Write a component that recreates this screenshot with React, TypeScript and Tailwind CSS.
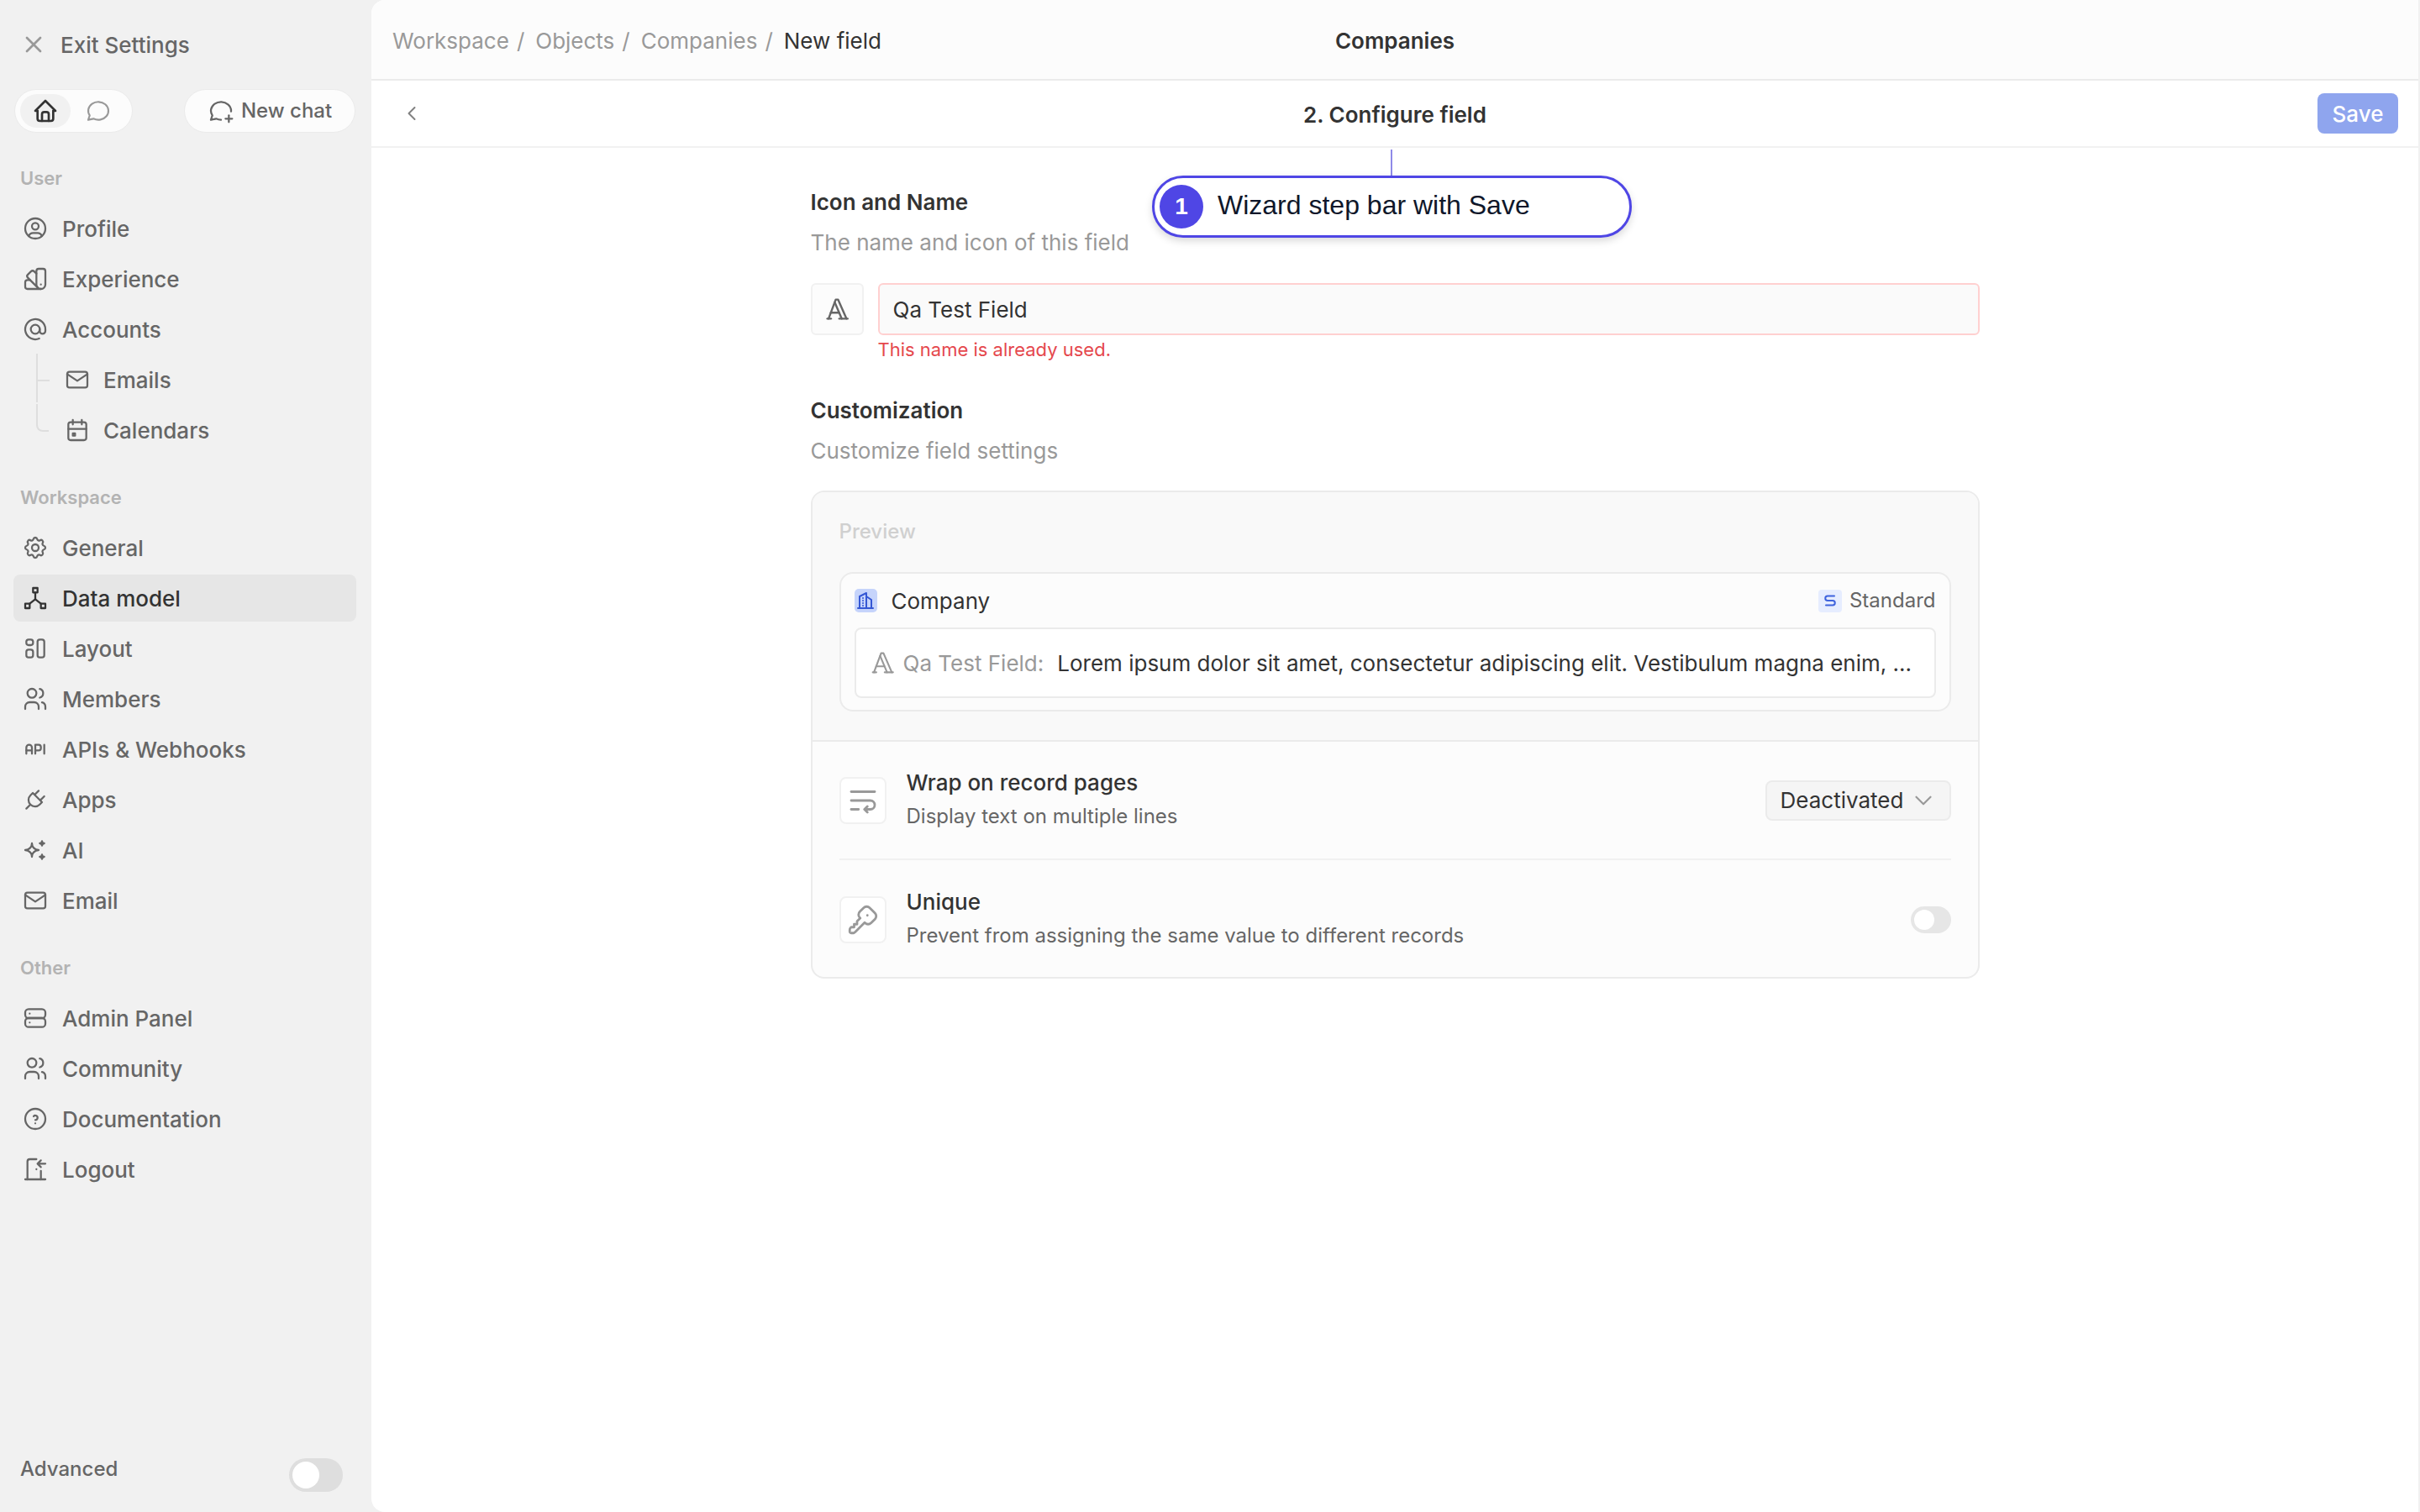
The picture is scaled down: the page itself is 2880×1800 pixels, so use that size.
import type { ReactNode } from "react";
import {
  TbX,
  TbHome,
  TbMessageCircle,
  TbMessageCirclePlus,
  TbUserCircle,
  TbColorSwatch,
  TbAt,
  TbMail,
  TbCalendarEvent,
  TbSettings,
  TbHierarchy2,
  TbLayout,
  TbUsers,
  TbApi,
  TbPlug,
  TbSparkles,
  TbServer,
  TbHelpCircle,
  TbDoorEnter,
  TbChevronLeft,
  TbChevronDown,
  TbTypography,
  TbBuildingSkyscraper,
  TbTextWrap,
  TbKey,
} from "react-icons/tb";

const font = "font-['Inter','Noto_Sans',sans-serif]";

function NavItem({
  icon: Icon,
  label,
  active = false,
}: {
  icon: typeof TbX;
  label: string;
  active?: boolean;
}) {
  return (
    <div
      className={`flex h-[56px] shrink-0 items-center gap-[16px] rounded-[8px] px-[10px] mb-[4px] text-[26px] font-medium ${
        active ? "bg-[#e6e6e6] text-[#333333]" : "text-[#666666]"
      }`}
    >
      <Icon size={32} strokeWidth={1.7} className="shrink-0" />
      <span>{label}</span>
    </div>
  );
}

function SubItem({
  icon: Icon,
  label,
  last = false,
}: {
  icon: typeof TbX;
  label: string;
  last?: boolean;
}) {
  return (
    <div className="relative mb-[4px] flex h-[56px] shrink-0 items-center gap-[15px] pl-[60px] text-[26px] font-medium text-[#666666]">
      <div
        className={`absolute left-[27px] top-[-3px] w-[15px] border-l-2 border-[#dedede] ${
          last ? "h-[33px] rounded-bl-[8px] border-b-2" : "h-[58px]"
        }`}
      />
      {!last && <div className="absolute left-[28px] top-[28px] h-[2px] w-[15px] bg-[#dedede]" />}
      <Icon size={32} strokeWidth={1.7} className="shrink-0" />
      <span>{label}</span>
    </div>
  );
}

function SectionLabel({ children }: { children: ReactNode }) {
  return <div className="mb-[18px] h-[28px] pl-[8px] text-[22px] leading-[28px] font-semibold text-[#b3b3b3]">{children}</div>;
}

function Sidebar() {
  return (
    <aside className="flex h-full w-[442px] shrink-0 flex-col pl-[16px] pr-[18px]">
      <div className="flex h-[106px] shrink-0 items-center gap-[16px] px-[8px] text-[26px] font-medium text-[#666666]">
        <TbX size={32} strokeWidth={2} className="text-[#999999]" />
        <span>Exit Settings</span>
      </div>
      <div className="flex shrink-0 items-center justify-between px-[1px]">
        <div className="flex h-[52px] w-[141px] items-center rounded-full border border-[#ebebeb] bg-[#fcfcfc] px-[6px]">
          <div className="flex h-[40px] w-[62px] items-center justify-center rounded-full bg-[#f1f1f1]">
            <TbHome size={32} strokeWidth={2} className="text-[#333333]" />
          </div>
          <div className="flex h-[40px] w-[70px] items-center justify-center">
            <TbMessageCircle size={32} strokeWidth={1.6} className="text-[#999999]" />
          </div>
        </div>
        <div className="flex h-[52px] w-[204px] items-center justify-center gap-[8px] rounded-full border border-[#ebebeb] bg-[#fcfcfc] text-[24px] font-medium text-[#666666]">
          <TbMessageCirclePlus size={32} strokeWidth={1.7} />
          <span>New chat</span>
        </div>
      </div>
      <div className="h-[40px] shrink-0" />
      <SectionLabel>User</SectionLabel>
      <NavItem icon={TbUserCircle} label="Profile" />
      <NavItem icon={TbColorSwatch} label="Experience" />
      <NavItem icon={TbAt} label="Accounts" />
      <SubItem icon={TbMail} label="Emails" />
      <SubItem icon={TbCalendarEvent} label="Calendars" last />
      <div className="h-[34px] shrink-0" />
      <SectionLabel>Workspace</SectionLabel>
      <NavItem icon={TbSettings} label="General" />
      <NavItem icon={TbHierarchy2} label="Data model" active />
      <NavItem icon={TbLayout} label="Layout" />
      <NavItem icon={TbUsers} label="Members" />
      <NavItem icon={TbApi} label="APIs & Webhooks" />
      <NavItem icon={TbPlug} label="Apps" />
      <NavItem icon={TbSparkles} label="AI" />
      <NavItem icon={TbMail} label="Email" />
      <div className="h-[34px] shrink-0" />
      <SectionLabel>Other</SectionLabel>
      <NavItem icon={TbServer} label="Admin Panel" />
      <NavItem icon={TbUsers} label="Community" />
      <NavItem icon={TbHelpCircle} label="Documentation" />
      <NavItem icon={TbDoorEnter} label="Logout" />
      <div className="mt-auto mb-[24px] flex items-center justify-between pl-[8px] pr-[16px]">
        <span className="-mt-[14px] text-[24px] font-medium text-[#666666]">Advanced</span>
        <div className="flex h-[40px] w-[64px] items-center rounded-full bg-[#dedede] pl-[4px]">
          <div className="h-[32px] w-[32px] rounded-full bg-white" />
        </div>
      </div>
    </aside>
  );
}

function Crumb({ children }: { children: ReactNode }) {
  return (
    <>
      <span>{children}</span>
      <span className="ml-[9px] mr-[13px]">/</span>
    </>
  );
}

function OptionRow({
  icon: Icon,
  title,
  text,
  children,
}: {
  icon: typeof TbX;
  title: string;
  text: string;
  children: ReactNode;
}) {
  return (
    <div className="flex items-center">
      <div className="flex h-[56px] w-[56px] shrink-0 items-center justify-center rounded-[8px] border-2 border-[#f1f1f1] bg-white text-[#999999]">
        <Icon size={42} strokeWidth={1.6} />
      </div>
      <div className="-mt-[2px] ml-[24px] flex-1">
        <div className="text-[26px] leading-[32px] font-medium text-[#333333]">{title}</div>
        <div className="mt-[9px] text-[24px] leading-[30px] text-[#666666]">{text}</div>
      </div>
      {children}
    </div>
  );
}

function FieldForm() {
  return (
    <div className="mx-auto w-[1391px] pt-[51px] text-[#333333]">
      <div className="text-[26px] leading-[28px] font-semibold">Icon and Name</div>
      <div className="mt-[20px] text-[26px] leading-[28px] text-[#999999]">The name and icon of this field</div>
      <div className="mt-[34px] flex gap-[17px]">
        <div className="flex h-[62px] w-[63px] items-center justify-center rounded-[6px] border-2 border-[#f1f1f1] bg-[#fcfcfc] text-[#666666]">
          <TbTypography size={34} strokeWidth={1.7} />
        </div>
        <div className="flex h-[62px] flex-1 items-center rounded-[6px] border-2 border-[#ffd0d0] bg-[#fafafa] px-[16px] text-[26px]">
          Qa Test Field
        </div>
      </div>
      <div className="ml-[80px] mt-[3px] text-[22px] leading-[28px] text-[#e5484d]">This name is already used.</div>

      <div className="mt-[45px] text-[26px] leading-[28px] font-semibold">Customization</div>
      <div className="mt-[20px] text-[26px] leading-[28px] text-[#999999]">Customize field settings</div>

      <div className="mt-[33px] h-[581px] overflow-hidden rounded-[16px] border-2 border-[#ebebeb] bg-[#fcfcfc]">
        <div className="h-[297px] border-b-2 border-[#ebebeb] bg-[#f9f9f9] px-[32px] pt-[32px]">
          <div className="text-[24px] leading-[30px] font-medium text-[#d0d0d0]">Preview</div>
          <div className="mt-[33px] h-[166px] rounded-[16px] border-2 border-[#ebebeb] bg-[#fcfcfc] px-[16px]">
            <div className="flex h-[64px] items-center justify-between">
              <div className="flex items-center gap-[17px] text-[26px]">
                <div className="flex h-[28px] w-[27px] items-center justify-center rounded-[5px] bg-[#c6d4fb] text-[#3557d4]">
                  <TbBuildingSkyscraper size={24} strokeWidth={2} />
                </div>
                <span>Company</span>
              </div>
              <div className="flex items-center gap-[9px] text-[24px] text-[#666666]">
                <div className="flex h-[27px] w-[28px] items-center justify-center rounded-[4px] bg-[#e6edff] text-[#3e63dd]">
                  <svg width="16" height="16" viewBox="0 0 16 16" fill="none" stroke="currentColor" strokeWidth="2" strokeLinecap="round">
                    <path d="M13 2.5H5a2.5 2.5 0 0 0 0 5.5h6a2.5 2.5 0 0 1 0 5.5H3" />
                  </svg>
                </div>
                <span>Standard</span>
              </div>
            </div>
            <div className="flex h-[84px] items-center whitespace-nowrap rounded-[8px] border-2 border-[#ebebeb] bg-white pl-[14px] text-[26px]">
              <TbTypography size={34} strokeWidth={1.5} className="shrink-0 text-[#999999]" />
              <span className="ml-[8px] shrink-0 text-[#999999]">Qa Test Field:</span>
              <span className="ml-[16px]">
                Lorem ipsum dolor sit amet, consectetur adipiscing elit. Vestibulum magna enim, ...
              </span>
            </div>
          </div>
        </div>
        <div className="px-[32px]">
          <div className="flex h-[141px] flex-col justify-center border-b-2 border-[#f1f1f1]">
            <OptionRow icon={TbTextWrap} title="Wrap on record pages" text="Display text on multiple lines">
              <div className="flex h-[48px] w-[221px] items-center justify-between rounded-[8px] border-2 border-[#ebebeb] bg-[#f5f5f5] pl-[16px] pr-[14px] text-[26px]">
                <span>Deactivated</span>
                <TbChevronDown size={34} strokeWidth={1.5} className="text-[#999999]" />
              </div>
            </OptionRow>
          </div>
          <div className="flex h-[141px] flex-col justify-center">
            <OptionRow icon={TbKey} title="Unique" text="Prevent from assigning the same value to different records">
              <div className="flex h-[32px] w-[48px] items-center rounded-full bg-[#e6e6e6] pl-[4px]">
                <div className="h-[24px] w-[24px] rounded-full bg-white" />
              </div>
            </OptionRow>
          </div>
        </div>
      </div>
    </div>
  );
}

export default function App() {
  return (
    <div className={`flex h-[1800px] w-[2880px] overflow-hidden bg-[#f1f1f1] ${font}`}>
      <Sidebar />
      <main className="relative mr-[2px] flex h-full flex-1 flex-col overflow-hidden rounded-l-[16px] bg-white">
        <header className="grid h-[96px] shrink-0 grid-cols-[1fr_auto_1fr] items-center border-b-2 border-[#ebebeb] bg-[#fcfcfc] px-[25px] pt-[2px] text-[26px]">
          <div className="flex items-center text-[#999999]">
            <Crumb>Workspace</Crumb>
            <Crumb>Objects</Crumb>
            <Crumb>Companies</Crumb>
            <span className="text-[#333333]">New field</span>
          </div>
          <div className="font-semibold text-[#333333]">Companies</div>
          <div />
        </header>
        <div className="grid h-[80px] shrink-0 grid-cols-[1fr_auto_1fr] items-center border-b-2 border-[#f1f1f1] bg-white px-[24px] text-[26px]">
          <TbChevronLeft size={28} strokeWidth={1.7} className="ml-[10px] text-[#808080]" />
          <div className="pt-[2px] font-semibold text-[#333333]">2. Configure field</div>
          <div className="flex justify-end">
            <div className="flex h-[48px] w-[96px] items-center justify-center rounded-[8px] bg-[#8fa5ee] font-medium text-white">
              Save
            </div>
          </div>
        </div>
        <FieldForm />
        <div className="absolute left-[1213px] top-[178px] h-[32px] w-[2px] bg-[#8f8ae8]" />
        <div className="absolute left-[929px] top-[209px] flex h-[74px] w-[571px] items-center rounded-full border-[3px] border-[#4f46e5] bg-white pl-[6px] shadow-[0_4px_10px_rgba(0,0,0,0.15)] font-['Liberation_Sans',sans-serif]">
          <div className="flex h-[52px] w-[52px] items-center justify-center rounded-full bg-[#4f46e5] text-[28px] font-bold text-white">
            1
          </div>
          <span className="mb-[4px] ml-[17px] text-[32px] text-[#0f172a]">Wizard step bar with Save</span>
        </div>
      </main>
    </div>
  );
}
